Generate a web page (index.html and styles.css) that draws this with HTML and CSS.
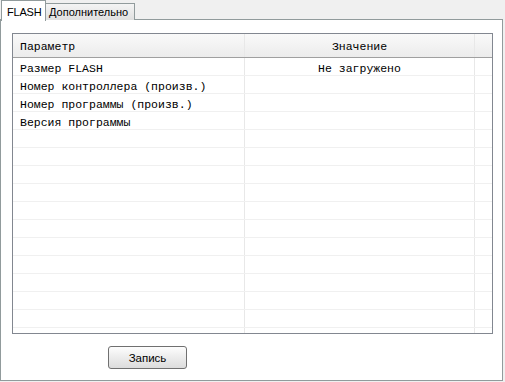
FILE: index.html
```html
<!DOCTYPE html>
<html>
<head>
<meta charset="utf-8">
<link rel="stylesheet" href="styles.css">
</head>
<body>
<div class="window">
  <div class="tabs">
    <div class="tab active">FLASH</div>
    <div class="tab">Дополнительно</div>
  </div>
  <div class="panel">
    <div class="grid">
      <div class="row head">
        <div class="cell c1">Параметр</div>
        <div class="cell c2">Значение</div>
        <div class="cell c3"></div>
      </div>
      <div class="row"><div class="cell c1">Размер FLASH</div><div class="cell c2">Не загружено</div><div class="cell c3"></div></div>
      <div class="row"><div class="cell c1">Номер контроллера (произв.)</div><div class="cell c2"></div><div class="cell c3"></div></div>
      <div class="row"><div class="cell c1">Номер программы (произв.)</div><div class="cell c2"></div><div class="cell c3"></div></div>
      <div class="row"><div class="cell c1">Версия программы</div><div class="cell c2"></div><div class="cell c3"></div></div>
      <div class="row"><div class="cell c1"></div><div class="cell c2"></div><div class="cell c3"></div></div>
      <div class="row"><div class="cell c1"></div><div class="cell c2"></div><div class="cell c3"></div></div>
      <div class="row"><div class="cell c1"></div><div class="cell c2"></div><div class="cell c3"></div></div>
      <div class="row"><div class="cell c1"></div><div class="cell c2"></div><div class="cell c3"></div></div>
      <div class="row"><div class="cell c1"></div><div class="cell c2"></div><div class="cell c3"></div></div>
      <div class="row"><div class="cell c1"></div><div class="cell c2"></div><div class="cell c3"></div></div>
      <div class="row"><div class="cell c1"></div><div class="cell c2"></div><div class="cell c3"></div></div>
      <div class="row"><div class="cell c1"></div><div class="cell c2"></div><div class="cell c3"></div></div>
      <div class="row"><div class="cell c1"></div><div class="cell c2"></div><div class="cell c3"></div></div>
      <div class="row"><div class="cell c1"></div><div class="cell c2"></div><div class="cell c3"></div></div>
      <div class="row"><div class="cell c1"></div><div class="cell c2"></div><div class="cell c3"></div></div>
      <div class="row"><div class="cell c1"></div><div class="cell c2"></div><div class="cell c3"></div></div>
    </div>
    <div class="actions">
      <button class="btn">Запись</button>
    </div>
  </div>
</div>
</body>
</html>
```

FILE: styles.css
```css
html, body {
  margin: 0;
  padding: 0;
  background: #f0f0f0;
}
.window {
  width: 505px;
  height: 382px;
  overflow: hidden;
  font-family: "Liberation Sans", "DejaVu Sans", sans-serif;
}
.tabs {
  display: flex;
  align-items: flex-end;
  height: 20px;
  padding-left: 1px;
  position: relative;
  z-index: 1;
}
.tab {
  box-sizing: border-box;
  height: 17px;
  width: 89px;
  padding-left: 3px;
  border: 1px solid #919b9c;
  border-left: none;
  border-bottom: none;
  background: linear-gradient(#f4f4f4, #e0e0e0);
  font-size: 11px;
  line-height: 16px;
  color: #000;
  white-space: nowrap;
}
.tab.active {
  width: 45px;
  height: 21px;
  background: #fff;
  border-left: 1px solid #919b9c;
  padding: 3px 0 0 5px;
  font-size: 11px;
  letter-spacing: -0.2px;
  line-height: 16px;
  margin-bottom: -1px;
}
.panel {
  box-sizing: border-box;
  width: 503px;
  height: 362px;
  margin-top: -1px;
  border: 1px solid #919b9c;
  background: #fff;
  padding: 13px 0 0 11px;
}
.grid {
  box-sizing: border-box;
  width: 481px;
  height: 301px;
  border: 1px solid #828790;
  overflow: hidden;
  font-family: "Liberation Mono", "DejaVu Sans Mono", monospace;
  font-size: 11.5px;
  color: #000;
}
.row {
  display: flex;
  height: 18px;
  border-bottom: 1px solid #f0f0f0;
  box-sizing: border-box;
}
.row.head {
  height: 24px;
  background: linear-gradient(#f9f9f9, #ececec);
  border-bottom: 1px solid #a0a0a0;
}
.cell {
  box-sizing: border-box;
  line-height: 17px;
  padding-top: 2px;
  white-space: nowrap;
  overflow: hidden;
}
.row.head .cell {
  line-height: 21px;
  padding-top: 2px;
}
.c1 {
  width: 232px;
  padding-left: 7px;
  border-right: 1px solid #e8e8e8;
}
.c2 {
  width: 230px;
  text-align: center;
  border-right: 1px solid #e8e8e8;
}
.c3 {
  flex: 1;
}
.actions {
  padding: 12px 0 0 96px;
}
.btn {
  box-sizing: border-box;
  width: 79px;
  height: 23px;
  border: 1px solid #707070;
  border-radius: 3px;
  background: linear-gradient(#fdfdfd, #ececec 50%, #dcdcdc);
  font-family: "Liberation Sans", "DejaVu Sans", sans-serif;
  font-size: 11.5px;
  color: #000;
  padding: 0;
}
```
